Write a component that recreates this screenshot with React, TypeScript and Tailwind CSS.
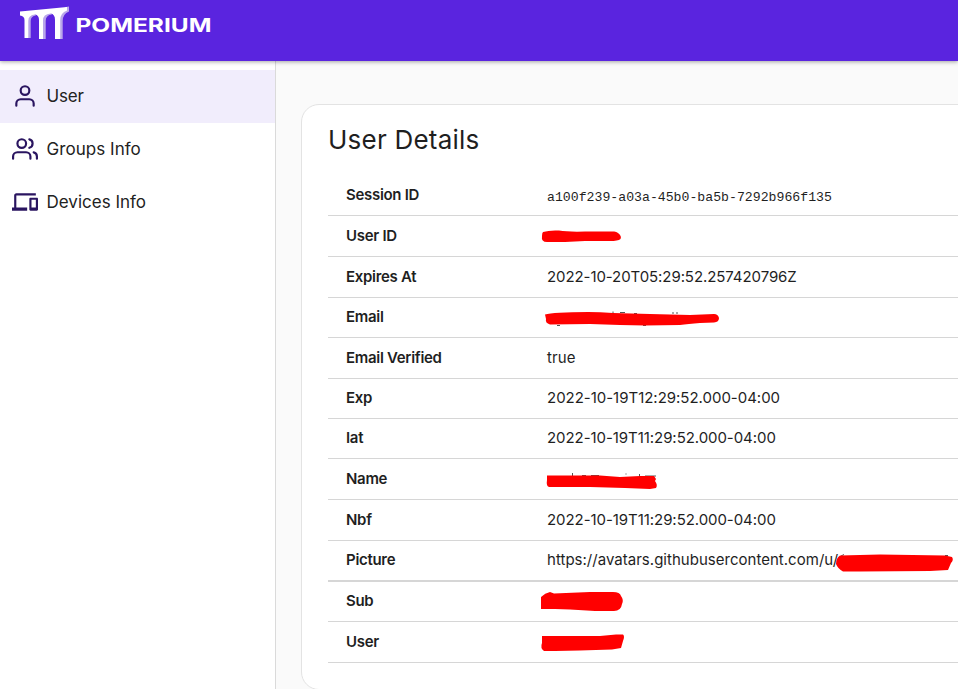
import type { ReactNode } from "react";

type Row = { label: string; h: string; value?: string; vt?: string; mark?: ReactNode };

function Mark({ y, d, bits }: { y: number; d: string; bits?: string }) {
  return (
    <svg className="absolute -left-[7px] top-0" width="418" height="40" viewBox={`540 ${y} 418 40`}>
      {bits && <path d={bits} stroke="#555" strokeWidth="1" fill="none" />}
      <path d={d} fill="#ff0000" />
    </svg>
  );
}

const rows: Row[] = [
  { label: "Session ID", h: "h-[41px]", value: "a100f239-a03a-45b0-ba5b-7292b966f135", vt: "mono" },
  { label: "User ID", h: "h-[41px]", mark: <Mark y={216} d="M543 232Q549 230 559 230.500Q568 232 585 231.500L613 231.500Q616 231 618 233Q622 236 620.500 239Q618 241 610 241L585 241L565 242H547Q541 242 542 236Q542 233 543 232Z" /> },
  { label: "Expires At", h: "h-[41px]", value: "2022-10-20T05:29:52.257420796Z", vt: "tracking-[-0.08px]" },
  { label: "Email", h: "h-[40px]", mark: <Mark y={298} bits="M613 313V311.500M620 312.500H625M634 313.500H637M673 312V314M677 312V314M557 325.500H560M643 325.500H646" d="M545 314.500Q553 312 588 312Q600 312 613 313L650 314L690 315L714 314Q718 314 719 318Q719 322 714 322.500L700 323Q688 324 680 325L645 325.500L620 325L590 324L550 324.500Q545 323 546 319Z" /> },
  { label: "Email Verified", h: "h-[41px]", value: "true", vt: "tracking-[0.150px]" },
  { label: "Exp", h: "h-[40px]", value: "2022-10-19T12:29:52.000-04:00", vt: "tracking-[-0.020px]" },
  { label: "Iat", h: "h-[40px]", value: "2022-10-19T11:29:52.000-04:00", vt: "tracking-[-0.060px]" },
  { label: "Name", h: "h-[41px]", mark: <Mark y={459} bits="M572.500 473V477M582 475.500H586M591 475.500H599M626 473.500V474.500M639.500 474V477M645 476H656" d="M547 475.500L600 475.500L620 477L640 476L654 476L656 479L655 481Q658 485 656 488L650 489L625 488L590 487L549 487Q546 486 547 480Z" /> },
  { label: "Nbf", h: "h-[41px]", value: "2022-10-19T11:29:52.000-04:00", vt: "tracking-[-0.060px]" },
  { label: "Picture", h: "h-[41px] border-b-2", value: "https://avatars.githubusercontent.com/u/", vt: "tracking-[0.020px]", mark: <Mark y={541} bits="M841 556L844 554.500M945 555.500H948" d="M840 555.500L880 554.500L945 555.500L952 557Q954 560 951 563L948 570L930 571L860 571.500L843 571.500Q838 569 836 564Q836 558 840 555.500Z" /> },
  { label: "Sub", h: "h-[40px]", mark: <Mark y={582} d="M541 597Q545 593 550 592L554 593.500L590 592L613 592Q620 592 621 596Q624 600 622 604Q621 611 614 611H595L570 609.500L555 609L541 609Z" /> },
  { label: "User", h: "h-[41px]", mark: <Mark y={622} d="M542 636L600 636L616 634.500H623Q625 636 623 641L621 648L612 649.500L580 650.500L555 651L544 651Q540 648 542 643Z" /> },
];

function Nav({ label, track, active, children }: { label: string; track: string; active?: boolean; children: ReactNode }) {
  return (
    <div className={`flex h-[53px] items-center pl-3 ${active ? "bg-[#f1edfc]" : ""}`}>
      <svg className="mb-px" width="26" height="26" viewBox="0 0 24 24" fill="none" stroke="#2a1560" strokeWidth="2" strokeLinecap="round" strokeLinejoin="round">
        {children}
      </svg>
      <span className={`ml-[8.5px] pt-px text-[17px] text-[#222] ${track}`}>{label}</span>
    </div>
  );
}

export default function App() {
  return (
    <div className="flex h-[689px] w-full flex-col overflow-hidden bg-[#fafafa] font-[Inter,'Open_Sans',sans-serif] text-[#1f1f1f]">
      <header className="z-10 h-[61px] shrink-0 bg-[#5a24df] shadow-[0_1px_4px_rgba(0,0,0,0.35)]">
        <svg width="240" height="61" viewBox="0 0 240 61">
          <path d="M27 38V19Q27 14 34 13.500L36 15.500Q30.700 16 30.700 21V38ZM42 39V19Q42 13 50 12.500L52 14.500Q45.700 15 45.700 21V39ZM59 39V18Q60 10 66 7L69 6.500V11.500Q62.700 14 62.700 21V39Z" fill="#b9a6ea" />
          <path d="M20 11.500L67 7V10.500Q60.200 13 60.200 20V39H55V20Q55 14 50.500 13.500Q43 14 43 20.500V39H39V20Q39 15 35 14.500Q28.300 15 28.300 21V38H24.500V20Q24.500 16 20 15.500Z" fill="#fff" />
          <text x="75.500" y="32" fontFamily="Inter, sans-serif" fontWeight="650" fontSize="19" textLength="136" lengthAdjust="spacingAndGlyphs" fill="#fff">POMERIUM</text>
        </svg>
      </header>
      <div className="flex min-h-0 flex-1">
        <nav className="w-[276px] shrink-0 border-r border-[#dadada] bg-white pt-[9px]">
          <Nav label="User" track="tracking-[-0.2px]" active>
            <path d="M20 21v-2a4 4 0 0 0-4-4H8a4 4 0 0 0-4 4v2" />
            <circle cx="12" cy="7" r="4" />
          </Nav>
          <Nav label="Groups Info" track="tracking-[0.050px]">
            <path d="M17 21v-2a4 4 0 0 0-4-4H5a4 4 0 0 0-4 4v2M23 21v-2a4 4 0 0 0-3-3.870M16 3.130a4 4 0 0 1 0 7.750" />
            <circle cx="9" cy="7" r="4" />
          </Nav>
          <Nav label="Devices Info" track="tracking-[0px]">
            <path stroke="none" fill="#2a1560" d="M4 6h18V4H4c-1.100 0-2 .9-2 2v11H0v3h14v-3H4zm19 2h-6c-.55 0-1 .45-1 1v10c0 .55.45 1 1 1h6c.55 0 1-.45 1-1V9c0-.55-.45-1-1-1m-1 9h-4v-7h4z" />
          </Nav>
        </nav>
        <main className="min-w-0 flex-1 overflow-hidden pl-[25px] pt-[43px]">
          <section className="h-[586px] w-[720px] rounded-[18px] border border-[#e3e3e3] bg-white pl-[26px]">
            <h1 className="h-[70px] pt-[17px] text-[26px] leading-[36px] tracking-[0.230px]">User Details</h1>
            {rows.map((r) => (
              <div key={r.label} className={`flex items-center border-b border-[#d6d6d6] pl-[18px] text-[15px] ${r.h}`}>
                <div className="w-[201px] shrink-0 font-semibold tracking-[-0.3px]">{r.label}</div>
                <div className="relative flex h-full flex-1 items-center whitespace-nowrap">
                  {r.vt === "mono" ? (
                    <span className="pt-[5px] font-['Liberation_Mono',monospace] text-[13.2px]">{r.value}</span>
                  ) : (
                    <span className={r.vt}>{r.value}</span>
                  )}
                  {r.mark}
                </div>
              </div>
            ))}
          </section>
        </main>
      </div>
    </div>
  );
}
